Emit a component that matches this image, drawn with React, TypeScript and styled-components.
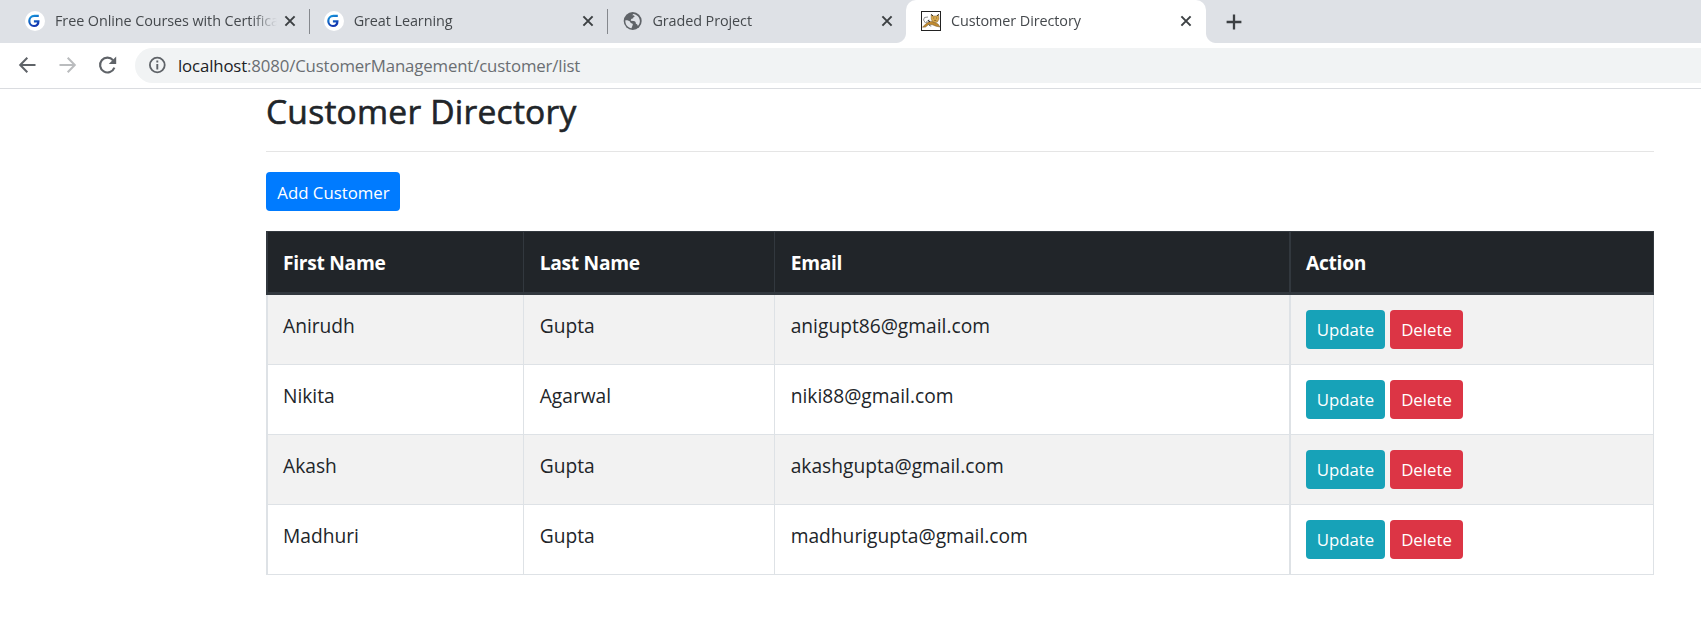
import React from "react";
import styled, { createGlobalStyle, css } from "styled-components";

const GlobalStyle = createGlobalStyle`
  *, *::before, *::after { box-sizing: border-box; }
  body {
    margin: 0;
    background: #fff;
    color: #212529;
    font-family: "Open Sans", "Noto Sans", sans-serif;
    font-size: 19.2px;
    overflow: hidden;
  }
`;

const TabStrip = styled.div`
  display: flex;
  height: 43px;
  padding-left: 8px;
  background: #dee1e6;
`;

const Tab = styled.div<{ $active?: boolean; $divided?: boolean }>`
  position: relative;
  display: flex;
  align-items: center;
  width: 298.7px;
  height: 43px;
  padding: 0 11px 1px 17px;
  color: #45494d;
  ${(p) =>
    p.$divided &&
    css`
      &::before {
        content: "";
        position: absolute;
        left: 2px;
        top: 9px;
        width: 1px;
        height: 25px;
        background: #85888d;
      }
    `}
  ${(p) =>
    p.$active &&
    css`
      width: 300px;
      margin-left: 1.9px;
      padding-left: 15px;
      padding-right: 14px;
      background: #fff;
      border-radius: 10px 10px 0 0;
      &::before,
      &::after {
        content: "";
        position: absolute;
        bottom: 0;
        width: 10px;
        height: 10px;
      }
      &::before {
        left: -10px;
        background: radial-gradient(circle at 0 0, transparent 9.5px, #fff 10.5px);
      }
      &::after {
        right: -10px;
        background: radial-gradient(circle at 100% 0, transparent 9.5px, #fff 10.5px);
      }
    `}
`;

const TabTitle = styled.span`
  flex: 1;
  min-width: 0;
  margin: 0 7px 0 10px;
  overflow: hidden;
  white-space: nowrap;
  font-size: 14.4px;
  letter-spacing: -0.08px;
  line-height: 22px;
  mask-image: linear-gradient(to right, #000 calc(100% - 26px), transparent);
`;

const NewTab = styled.div`
  display: flex;
  align-items: center;
  margin-left: 20px;
`;

const Toolbar = styled.div`
  display: flex;
  align-items: center;
  height: 46px;
  padding: 0 0 1px 17px;
  border-bottom: 1px solid #dadce0;
`;

const NavIcon = styled.svg`
  flex: none;
  width: 20px;
  height: 20px;
  margin-right: 20px;
`;

const AddressBar = styled.div`
  display: flex;
  align-items: center;
  flex: 1;
  height: 35px;
  margin-left: -2px;
  padding-left: 13px;
  border-radius: 18px 0 0 18px;
  background: #f1f3f4;
  color: #6a6e72;
  font-size: 16.8px;
  line-height: 24px;
`;

const Url = styled.span`
  margin: 1px 0 0 12px;
  letter-spacing: -0.14px;
`;

const Host = styled.span`
  color: #202124;
`;

const Page = styled.main`
  width: 1388px;
  margin-left: 266px;
`;

const Title = styled.h3`
  margin: 0;
  height: 62px;
  font-size: 33.6px;
  font-weight: 500;
  letter-spacing: 0.22px;
  line-height: 44px;
  -webkit-text-stroke: 0.6px currentColor;
`;

const Rule = styled.hr`
  margin: 0 0 20px;
  border: 0;
  border-top: 1px solid #e5e5e5;
`;

const tones = { primary: "#007bff", info: "#17a2b8", danger: "#dc3545" };

const Button = styled.button<{ $tone: keyof typeof tones; $width: number }>`
  display: block;
  width: ${(p) => p.$width}px;
  height: 39px;
  padding: ${(p) => (p.$tone === "primary" ? "2px 0 0 1px" : "1px 0 0")};
  border: 0;
  border-radius: 4px;
  background: ${(p) => tones[p.$tone]};
  color: #fff;
  font-family: inherit;
  font-size: 16.8px;
  line-height: 26px;
  white-space: nowrap;
`;

const Table = styled.table`
  width: 1388px;
  margin-top: 20px;
  table-layout: fixed;
  border-collapse: separate;
  border-spacing: 0;
`;

const Row = styled.tr`
  &:nth-child(odd) > td {
    background: #f2f2f2;
  }
`;

const cell = css`
  padding: 0 0 0 15.7px;
  text-align: left;
  vertical-align: top;
  border: 0 solid #dee2e6;
  border-left-width: 1px;
  &:first-child,
  &:last-child {
    padding-left: 15px;
    border-left-width: 2px;
  }
  &:last-child {
    border-right-width: 1px;
  }
`;

const HeadCell = styled.th<{ $width: number }>`
  ${cell}
  width: ${(p) => p.$width}px;
  height: 64px;
  padding-top: 15px;
  border-color: #32383e;
  border-top-width: 1px;
  border-bottom-width: 3px;
  background: #212529;
  color: #fff;
  font-weight: 700;
  letter-spacing: -0.28px;
  line-height: 32px;
`;

const Cell = styled.td`
  ${cell}
  height: 70px;
  padding-top: 15px;
  border-bottom-width: 1px;
  line-height: 32px;
`;

const Actions = styled.div`
  display: flex;
  gap: 5px;
`;

const GreatLearningIcon = () => (
  <svg width="20" height="20" viewBox="0 0 20 20">
    <defs>
      <linearGradient id="gl" x1="0" y1="0" x2="0.4" y2="1">
        <stop offset="0" stopColor="#1596dc" />
        <stop offset="1" stopColor="#1237b0" />
      </linearGradient>
    </defs>
    <circle cx="10" cy="10" r="10" fill="#fff" />
    <path
      d="M13.8 4.9H9.3C6.3 4.9 4.3 7.2 4.3 10C4.3 12.9 6.4 15 9 15C11.8 15 13.4 13.1 13.4 10.3H8.9"
      fill="none"
      stroke="url(#gl)"
      strokeWidth="2.2"
    />
  </svg>
);

const GlobeIcon = () => (
  <svg width="20" height="20" viewBox="0 0 20 20">
    <circle cx="10.7" cy="10" r="9" fill="#5f6368" />
    <path
      d="M3.4 9.2C4.6 9 6.8 9.3 7.7 10.3C8.7 11.3 8.2 12 9.4 12.3C10.8 12.6 11.1 13.1 10.7 14.1L9.5 17.2C5.6 16.7 2.9 13.2 3.4 9.2Z"
      fill="#dee1e6"
    />
    <path
      d="M11.2 2.9C14.9 3.2 17.8 6.2 17.9 10C17.9 12 17.1 13.8 15.8 15.1C15.6 13.6 15 13 13.9 12.8C13.8 11.1 13.2 10.2 11.6 10.1L8.8 9.7C8.8 8.1 9.6 7.5 11 7.5C11.3 6.2 12.2 5.8 12.8 5.6C12.3 4.4 11.2 4.2 10.3 4.3Z"
      fill="#dee1e6"
    />
  </svg>
);

const TomcatIcon = () => (
  <svg width="20" height="20" viewBox="0 0 20 20">
    <rect x="0.5" y="0.5" width="19" height="19" fill="#fff" stroke="#222" />
    <path d="M7 6L3.5 6.5L2.5 9L4.5 12M6.5 9.5L5 12M8 8.5L7 12" fill="none" stroke="#777" strokeWidth="0.8" />
    <path
      d="M1.5 16.2L5.5 12.2L9.5 10.4L12.5 10.8L17 13L19 16L15 15.2L11.5 13.8L7.5 13.6L4.5 16Z"
      fill="#c18a2f"
      stroke="#6e5328"
      strokeWidth="0.5"
    />
    <path
      d="M10.2 3.5L12.5 5H15.2L17.6 3.4L18 8L16.4 10.9L14 11.8L11.3 10.5L10.2 8Z"
      fill="#d7a84c"
      stroke="#806030"
      strokeWidth="0.5"
    />
    <path d="M10.2 3.5L12 5M17.6 3.4L16.2 5M7.2 9L9 11M8 13.6L9.7 15.4" stroke="#292929" strokeWidth="1" />
    <path d="M12.2 7H13.2M15 7H16M13.2 9.4H15.2" stroke="#77552b" strokeWidth="0.8" />
  </svg>
);

const CloseIcon = () => (
  <svg width="12" height="12" viewBox="0 0 12 12">
    <path d="M1.4 1.4L10.6 10.6M10.6 1.4L1.4 10.6" stroke="#3c4043" strokeWidth="2" />
  </svg>
);

const tabs = [
  { title: "Free Online Courses with Certifica", icon: <GreatLearningIcon /> },
  { title: "Great Learning", icon: <GreatLearningIcon />, divided: true },
  { title: "Graded Project", icon: <GlobeIcon />, divided: true },
  { title: "Customer Directory", icon: <TomcatIcon />, active: true },
];

const columns = [
  { label: "First Name", width: 257 },
  { label: "Last Name", width: 251 },
  { label: "Email", width: 515 },
  { label: "Action", width: 365 },
];

const customers = [
  { first: "Anirudh", last: "Gupta", email: "anigupt86@gmail.com" },
  { first: "Nikita", last: "Agarwal", email: "niki88@gmail.com" },
  { first: "Akash", last: "Gupta", email: "akashgupta@gmail.com" },
  { first: "Madhuri", last: "Gupta", email: "madhurigupta@gmail.com" },
];

export default function App() {
  return (
    <>
      <GlobalStyle />
      <TabStrip>
        {tabs.map((t) => (
          <Tab key={t.title} $active={t.active} $divided={t.divided}>
            {t.icon}
            <TabTitle>{t.title}</TabTitle>
            <CloseIcon />
          </Tab>
        ))}
        <NewTab>
          <svg width="16" height="16" viewBox="0 0 16 16">
            <path d="M8 0.6V15.4M0.6 8H15.4" stroke="#3c4043" strokeWidth="2.3" />
          </svg>
        </NewTab>
      </TabStrip>
      <Toolbar>
        <NavIcon viewBox="0 0 20 20">
          <path d="M18.5 10H3.5M10.3 2.8L3.2 10L10.3 17.2" fill="none" stroke="#5f6368" strokeWidth="2" />
        </NavIcon>
        <NavIcon viewBox="0 0 20 20">
          <path d="M2.5 10H17.5M10.7 2.8L17.8 10L10.7 17.2" fill="none" stroke="#babcbe" strokeWidth="2" />
        </NavIcon>
        <NavIcon viewBox="0 0 20 20">
          <path d="M17.4 12.6A7.4 7.4 0 1 1 16.1 5.2" fill="none" stroke="#5f6368" strokeWidth="2.1" />
          <path d="M19.2 1.6V9H11.8Z" fill="#5f6368" />
        </NavIcon>
        <AddressBar>
          <svg width="18" height="18" viewBox="0 0 18 18">
            <circle cx="9.3" cy="9" r="7.4" fill="none" stroke="#5f6368" strokeWidth="1.8" />
            <path d="M9.3 4.6V6.4M9.3 8V13.4" stroke="#5f6368" strokeWidth="1.9" />
          </svg>
          <Url>
            <Host>localhost</Host>:8080/CustomerManagement/customer/list
          </Url>
        </AddressBar>
      </Toolbar>
      <Page>
        <Title>Customer Directory</Title>
        <Rule />
        <Button $tone="primary" $width={134}>
          Add Customer
        </Button>
        <Table>
          <thead>
            <tr>
              {columns.map((c) => (
                <HeadCell key={c.label} $width={c.width}>
                  {c.label}
                </HeadCell>
              ))}
            </tr>
          </thead>
          <tbody>
            {customers.map((c) => (
              <Row key={c.email}>
                <Cell>{c.first}</Cell>
                <Cell>{c.last}</Cell>
                <Cell>{c.email}</Cell>
                <Cell>
                  <Actions>
                    <Button $tone="info" $width={79}>
                      Update
                    </Button>
                    <Button $tone="danger" $width={73}>
                      Delete
                    </Button>
                  </Actions>
                </Cell>
              </Row>
            ))}
          </tbody>
        </Table>
      </Page>
    </>
  );
}
